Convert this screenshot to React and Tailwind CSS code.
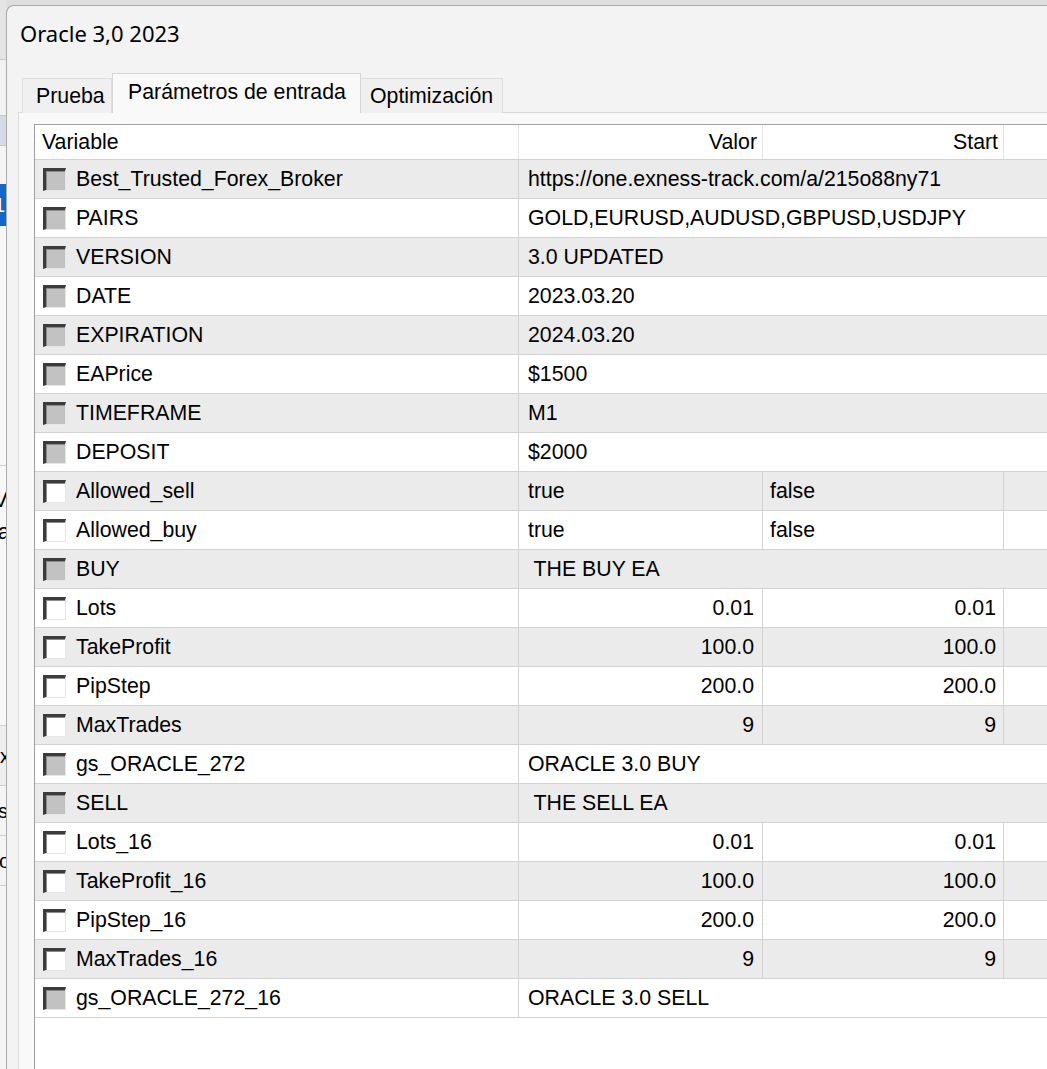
import React from 'react';

const rows = [
  { name: 'Best_Trusted_Forex_Broker', type: 'str', v: 'https://one.exness-track.com/a/215o88ny71' },
  { name: 'PAIRS', type: 'str', v: 'GOLD,EURUSD,AUDUSD,GBPUSD,USDJPY' },
  { name: 'VERSION', type: 'str', v: '3.0 UPDATED' },
  { name: 'DATE', type: 'str', v: '2023.03.20' },
  { name: 'EXPIRATION', type: 'str', v: '2024.03.20' },
  { name: 'EAPrice', type: 'str', v: '$1500' },
  { name: 'TIMEFRAME', type: 'str', v: 'M1' },
  { name: 'DEPOSIT', type: 'str', v: '$2000' },
  { name: 'Allowed_sell', type: 'bool', v: 'true', s: 'false' },
  { name: 'Allowed_buy', type: 'bool', v: 'true', s: 'false' },
  { name: 'BUY', type: 'str', v: ' THE BUY EA' },
  { name: 'Lots', type: 'num', v: '0.01', s: '0.01' },
  { name: 'TakeProfit', type: 'num', v: '100.0', s: '100.0' },
  { name: 'PipStep', type: 'num', v: '200.0', s: '200.0' },
  { name: 'MaxTrades', type: 'num', v: '9', s: '9' },
  { name: 'gs_ORACLE_272', type: 'str', v: 'ORACLE 3.0 BUY' },
  { name: 'SELL', type: 'str', v: ' THE SELL EA' },
  { name: 'Lots_16', type: 'num', v: '0.01', s: '0.01' },
  { name: 'TakeProfit_16', type: 'num', v: '100.0', s: '100.0' },
  { name: 'PipStep_16', type: 'num', v: '200.0', s: '200.0' },
  { name: 'MaxTrades_16', type: 'num', v: '9', s: '9' },
  { name: 'gs_ORACLE_272_16', type: 'str', v: 'ORACLE 3.0 SELL' },
];

function Check({ gray }) {
  return (
    <span
      className={
        'block w-[23px] h-[23px] shrink-0 border-t-[3px] border-l-[3px] border-t-[#3c3c3c] border-l-[#3c3c3c] border-r border-b border-r-[#e6e6e6] border-b-[#e6e6e6] shadow-[inset_1px_1px_0_#8a8a8a] ' +
        (gray ? 'bg-[#c2c2c2]' : 'bg-white')
      }
    />
  );
}

function Row({ r, i }) {
  const bg = i % 2 === 0 ? 'bg-[#ebebeb]' : 'bg-white';
  return (
    <div className={'flex h-[39px] shrink-0 border-b border-[#d2d2d2] ' + bg}>
      <div className="w-[484px] shrink-0 flex items-center gap-[10px] pl-[8px] border-r border-[#d2d2d2]">
        <Check gray={r.type === 'str'} />
        <span className="pt-[2px]">{r.name}</span>
      </div>
      {r.type === 'str' ? (
        <div className="flex-1 flex items-center pl-[9px] pt-[2px] whitespace-pre">{r.v}</div>
      ) : (
        <>
          <div
            className={
              'w-[244px] shrink-0 flex items-center pt-[2px] border-r border-[#d2d2d2] ' +
              (r.type === 'num' ? 'justify-end pr-[8px]' : 'pl-[9px]')
            }
          >
            {r.v}
          </div>
          <div
            className={
              'w-[241px] shrink-0 flex items-center pt-[2px] border-r border-[#d2d2d2] ' +
              (r.type === 'num' ? 'justify-end pr-[7px]' : 'pl-[7px]')
            }
          >
            {r.s}
          </div>
          <div className="flex-1" />
        </>
      )}
    </div>
  );
}

export default function App() {
  return (
    <div
      className="w-[1047px] h-[1069px] flex overflow-hidden bg-[#dedede] text-black text-[21.3px]"
      style={{ fontFamily: '"Liberation Sans", Arial, sans-serif' }}
    >
      {/* background window strip */}
      <div className="w-[6px] shrink-0 flex flex-col overflow-hidden text-[20px] leading-none">
        <div className="h-[60px] bg-[#e4e4e4] border-b border-[#c8c8c8]" />
        <div className="h-[56px] bg-[#f2f2f2] border-b border-[#c8c8c8]" />
        <div className="h-[30px] bg-[#d3dbe4] border-b border-[#c8c8c8]" />
        <div className="h-[38px] bg-[#f4f4f4]" />
        <div className="h-[42px] bg-[#1467c8] text-white flex items-center justify-end">
          <span className="mr-[1px]">1</span>
        </div>
        <div className="h-[240px] bg-[#f7f7f7] border-b border-[#cfcfcf]" />
        <div className="h-[100px] bg-[#f7f7f7] flex flex-col justify-center items-end gap-[10px] text-[22px]">
          <span className="-mr-[2px]">V</span>
          <span className="-mr-[4px]">a</span>
        </div>
        <div className="h-[160px] bg-[#f7f7f7] border-b border-[#cfcfcf]" />
        <div className="h-[60px] bg-[#eeeeee] border-b border-[#cfcfcf] flex items-center justify-end">
          <span className="-mr-[4px]">x</span>
        </div>
        <div className="h-[50px] bg-[#f4f4f4] border-b border-[#cfcfcf] flex items-center justify-end">
          <span className="-mr-[2px]">rs</span>
        </div>
        <div className="h-[50px] bg-[#f4f4f4] border-b border-[#cfcfcf] flex items-center justify-end">
          <span className="-mr-[4px]">o</span>
        </div>
        <div className="flex-1 bg-[#f4f4f4]" />
      </div>

      {/* main window */}
      <div className="flex-1 mt-[5px] rounded-tl-[8px] border-l border-t border-[#a9a9a9] bg-[#f3f3f3] flex flex-col min-w-0">
        <div
          className="h-[56px] shrink-0 flex items-center pl-[13px] text-[22px] pb-[2px]"
          style={{ fontFamily: '"Noto Sans", "Open Sans", sans-serif' }}
        >
          Oracle 3,0 2023
        </div>
        <div className="h-[11px] shrink-0" />
        {/* tabs */}
        <div className="h-[40px] shrink-0 flex items-end pl-[15px] -mb-px relative z-10">
          <div className="w-[90px] h-[35px] flex items-center pl-[13px] pt-[2px] bg-[#f0f0f0] border border-b-0 border-[#dedede]">
            Prueba
          </div>
          <div className="w-[249px] h-[40px] flex items-center pl-[15px] pb-[2px] bg-[#f9f9f9] border border-b-0 border-[#d6d6d6]">
            Parámetros de entrada
          </div>
          <div className="w-[142px] h-[35px] flex items-center pl-[9px] pt-[2px] bg-[#f0f0f0] border border-b-0 border-l-0 border-[#dedede]">
            Optimización
          </div>
        </div>
        {/* panel */}
        <div className="flex-1 ml-[11px] bg-[#f9f9f9] border-t border-l border-[#dadada] pt-[11px] pl-[15px] flex flex-col min-h-0">
          <div className="flex-1 bg-white border-l border-t border-[#a0a0a0] flex flex-col overflow-hidden min-w-0">
            <div className="flex h-[35px] shrink-0 border-b border-[#d2d2d2] bg-white">
              <div className="w-[484px] shrink-0 flex items-center pl-[7px] pt-[2px] border-r border-[#e4e4e4]">Variable</div>
              <div className="w-[244px] shrink-0 flex items-center justify-end pr-[5px] pt-[2px] border-r border-[#e4e4e4]">Valor</div>
              <div className="w-[241px] shrink-0 flex items-center justify-end pr-[5px] pt-[2px] border-r border-[#e4e4e4]">Start</div>
              <div className="flex-1" />
            </div>
            {rows.map((r, i) => (
              <Row key={r.name} r={r} i={i} />
            ))}
          </div>
        </div>
      </div>
    </div>
  );
}
